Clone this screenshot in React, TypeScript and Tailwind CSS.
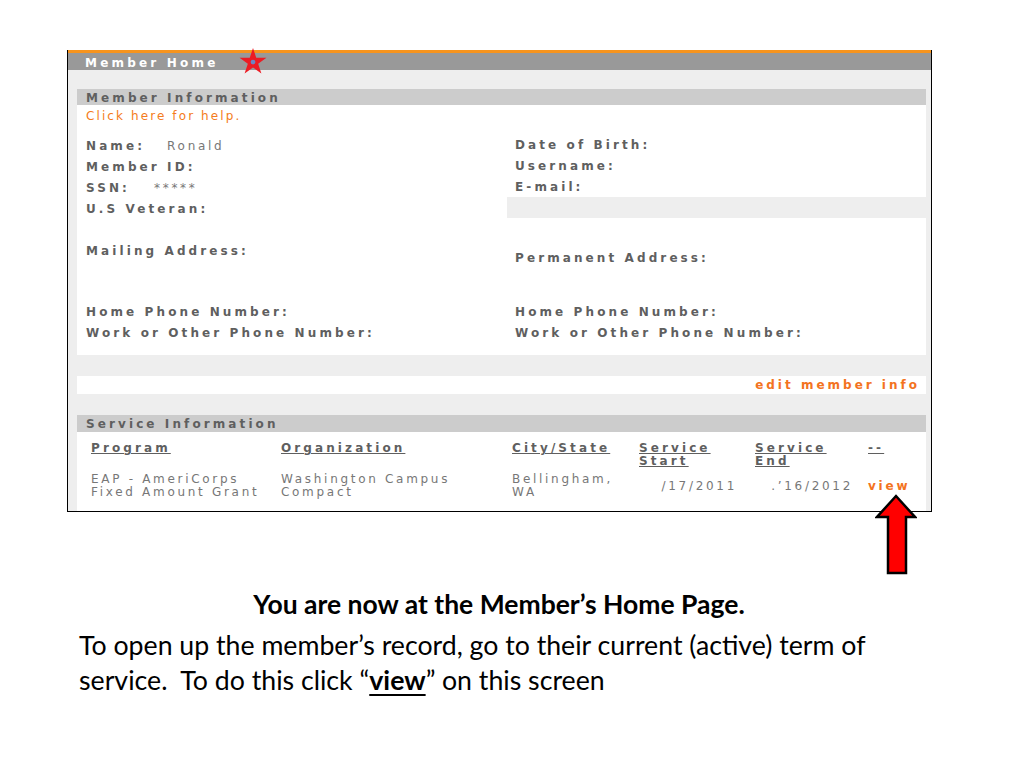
import React from "react";

const vf = "font-['DejaVu_Sans',Verdana,sans-serif]";
const lab = `${vf} text-[12px] font-bold tracking-[3.1px] text-[#5f5f5f]`;
const reg = `${vf} text-[12px] tracking-[2.7px] text-[#777]`;

function Row({ children, className = "" }: { children: React.ReactNode; className?: string }) {
  return <div className={`flex h-[21px] items-center whitespace-nowrap ${className}`}>{children}</div>;
}

export default function App() {
  return (
    <div className="relative min-h-[768px] w-[1024px] bg-white">
      <div className="ml-[67px] pt-[50px]">
        <div className="relative w-[865px] border-x border-b border-black bg-[#eeeeee]">
          <div className="h-[3px] bg-[#f7941d]" />
          <div className="flex h-[17px] items-center bg-[#999999] pl-[17px] pt-[2px]">
            <span className={`${vf} text-[12px] font-bold tracking-[3.2px] text-white`}>Member Home</span>
          </div>
          <svg className="absolute left-[171px] top-[-3px]" width="28" height="28" viewBox="0 0 26 26">
            <polygon
              points="13,1 16,10 25.5,10 17.8,15.5 20.8,24.5 13,19 5.2,24.5 8.2,15.5 0.5,10 10,10"
              fill="#ec1c24"
            />
            <circle cx="13" cy="14" r="2.2" fill="#6b86c4" />
          </svg>
          <div className="pl-[9px] pr-[5px] pt-[19px]">
            <div className="flex h-[16px] items-center bg-[#cccccc] pl-[9px] pt-[1px]">
              <span className={lab}>Member Information</span>
            </div>
            <div className="grid grid-cols-[430px_1fr] bg-white">
              <div className="flex flex-col pl-[9px]">
                <div className="flex h-[22px] items-center">
                  <span className={`${vf} text-[12px] tracking-[2.1px] text-[#f47b20]`}>Click here for help.</span>
                </div>
                <div className="h-[8px]" />
                <Row>
                  <span className={lab}>Name:</span>
                  <span className={`${reg} ml-[22px]`}>Ronald</span>
                </Row>
                <Row>
                  <span className={lab}>Member ID:</span>
                </Row>
                <Row>
                  <span className={lab}>SSN:</span>
                  <span className={`${reg} ml-[24px]`}>*****</span>
                </Row>
                <Row>
                  <span className={lab}>U.S Veteran:</span>
                </Row>
                <div className="h-[21px]" />
                <Row>
                  <span className={lab}>Mailing Address:</span>
                </Row>
                <div className="h-[40px]" />
                <Row>
                  <span className={lab}>Home Phone Number:</span>
                </Row>
                <Row>
                  <span className={lab}>Work or Other Phone Number:</span>
                </Row>
                <div className="h-[12px]" />
              </div>
              <div className="flex flex-col">
                <div className="h-[29px]" />
                <Row className="pl-[8px]">
                  <span className={lab}>Date of Birth:</span>
                </Row>
                <Row className="pl-[8px]">
                  <span className={lab}>Username:</span>
                </Row>
                <Row className="pl-[8px]">
                  <span className={lab}>E-mail:</span>
                </Row>
                <div className="h-[21px] bg-[#eeeeee]" />
                <div className="h-[29px]" />
                <Row className="pl-[8px]">
                  <span className={lab}>Permanent Address:</span>
                </Row>
                <div className="h-[33px]" />
                <Row className="pl-[8px]">
                  <span className={lab}>Home Phone Number:</span>
                </Row>
                <Row className="pl-[8px]">
                  <span className={lab}>Work or Other Phone Number:</span>
                </Row>
                <div className="h-[12px]" />
              </div>
            </div>
            <div className="h-[21px]" />
            <div className="flex h-[18px] items-center justify-end bg-white pr-[6px]">
              <span className={`${vf} text-[12px] font-bold tracking-[3px] text-[#f37321]`}>edit member info</span>
            </div>
            <div className="h-[21px]" />
            <div className="flex h-[17px] items-center bg-[#cccccc] pl-[9px] pt-[1px]">
              <span className={lab}>Service Information</span>
            </div>
            <div className="h-[79px] bg-white pl-[14px] pt-[10px]">
              <div className="grid grid-cols-[190px_231px_127px_116px_113px_1fr] leading-[13px]">
                <span className={`${lab} underline decoration-1 underline-offset-1`}>Program</span>
                <span className={`${lab} underline decoration-1 underline-offset-1`}>Organization</span>
                <span className={`${lab} underline decoration-1 underline-offset-1`}>City/State</span>
                <span className={`${lab} underline decoration-1 underline-offset-1`}>
                  Service
                  <br />
                  Start
                </span>
                <span className={`${lab} underline decoration-1 underline-offset-1`}>
                  Service
                  <br />
                  End
                </span>
                <span className={`${lab} underline decoration-1 underline-offset-1`}>--</span>
              </div>
              <div className="mt-[5px] grid grid-cols-[190px_231px_127px_116px_113px_1fr] items-center leading-[13px]">
                <span className={`${reg} whitespace-nowrap`}>
                  EAP - AmeriCorps
                  <br />
                  Fixed Amount Grant
                </span>
                <span className={`${reg} whitespace-nowrap`}>
                  Washington Campus
                  <br />
                  Compact
                </span>
                <span className={`${reg} whitespace-nowrap`}>
                  Bellingham,
                  <br />
                  WA
                </span>
                <span className={`${reg} pr-[18px] text-right`}>/17/2011</span>
                <span className={`${reg} pr-[15px] text-right`}>.’16/2012</span>
                <span className={`${vf} text-[12px] font-bold tracking-[2.8px] text-[#f37321]`}>view</span>
              </div>
            </div>
          </div>
        </div>
      </div>

      <svg className="absolute left-[875px] top-[494px]" width="42" height="82" viewBox="0 0 42 82">
        <polygon
          points="21,2 40,23 31,23 31,79 13,79 13,23 2,23"
          fill="#ff0000"
          stroke="#000"
          strokeWidth="2.5"
          strokeLinejoin="miter"
        />
      </svg>

      <div className="mt-[77px] w-[998px] text-center font-['Lato',sans-serif] text-[26.5px] font-bold leading-[30px] text-black">
        You are now at the Member’s Home Page.
      </div>
      <div className="mt-[9px] whitespace-nowrap pl-[79px] font-['Lato',sans-serif] text-[26.7px] leading-[35px] text-black">
        To open up the member’s record, go to their current (active) term of
        <br />
        service.&nbsp; To do this click “<span className="font-bold underline underline-offset-4">view</span>” on this screen
      </div>
    </div>
  );
}
